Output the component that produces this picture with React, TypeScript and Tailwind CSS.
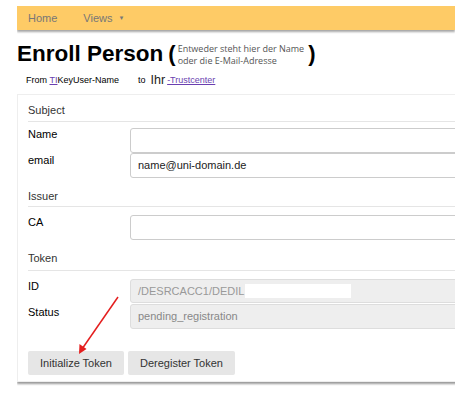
import React from "react";

function Header({ children, pt, pb }: { children: React.ReactNode; pt: string; pb: string }) {
  return (
    <div className={`${pt} ${pb} border-b border-[#e5e5e5] text-[11px] leading-[13px] text-[#333]`}>{children}</div>
  );
}

export default function App() {
  return (
    <div className="w-[468px] h-[393px] bg-white relative overflow-hidden font-['Liberation_Sans',Arial,sans-serif]">
      <div className="ml-[17px] w-[438px] overflow-x-clip pt-[6px]">
        {/* navbar */}
        <div className="h-[24px] bg-[#fecb66] shadow-[0_2px_2px_rgba(0,0,0,0.35)] flex items-center text-[11px] text-[#777] pl-[11px]">
          <span>Home</span>
          <span className="ml-[26px]">Views</span>
          <span className="ml-[6px] text-[6px] leading-none">▼</span>
        </div>

        {/* title */}
        <div className="mt-[10px] h-[28px] flex items-center">
          <span className="text-[22.5px] font-bold leading-[28px] text-black">Enroll Person</span>
          <span className="ml-[5px] text-[22px] font-bold leading-[28px] text-black">(</span>
          <div className="ml-[2px] font-['Open_Sans',sans-serif] text-[9px] leading-[12px] text-[#555] mt-[2px]">
            <div>Entweder steht hier der Name</div>
            <div>oder die E-Mail-Adresse</div>
          </div>
          <span className="ml-[4px] text-[22px] font-bold leading-[28px] text-black">)</span>
        </div>

        <div className="mt-[6px] h-[12px] flex items-center text-[9px] leading-[12px] text-black pl-[9px]">
          <span>From&nbsp;</span>
          <span className="text-[#6a3fb0] underline">TI</span>
          <span>KeyUser-Name</span>
          <span className="ml-[19px]">to</span>
          <span className="ml-[5px] text-[12.5px] text-[#222]">Ihr</span>
          <span className="ml-[2px] text-[#6a3fb0] underline">-Trustcenter</span>
        </div>

        {/* card */}
        <div className="mt-[8px] w-[470px] bg-white border border-[#eeeeee] shadow-[0_2px_2px_rgba(0,0,0,0.4)] pl-[10px] pb-[6px]">
          <Header pt="pt-[9px]" pb="pb-[4px]">Subject</Header>

          <div className="mt-[6px] flex flex-col gap-0">
            <div className="flex h-[25px]">
              <div className="w-[102px] text-[11px] leading-[13px] text-black">Name</div>
              <div className="flex-1 border border-[#cccccc] rounded-[3px] bg-white"></div>
            </div>
            <div className="flex h-[25px]">
              <div className="w-[102px] text-[11px] leading-[13px] text-black pt-[1px]">email</div>
              <div className="flex-1 border border-[#cccccc] rounded-[3px] bg-white flex items-center pl-[7px] text-[11px] text-[#222]">
                name@uni-domain.de
              </div>
            </div>
          </div>

          <Header pt="pt-[12px]" pb="pb-[3px]">Issuer</Header>

          <div className="mt-[8px] flex h-[25px]">
            <div className="w-[102px] text-[11px] leading-[13px] text-black pt-[1px]">CA</div>
            <div className="flex-1 border border-[#cccccc] rounded-[3px] bg-white"></div>
          </div>

          <Header pt="pt-[12px]" pb="pb-[5px]">Token</Header>

          <div className="mt-[8px] flex flex-col gap-[1px]">
            <div className="flex h-[24px]">
              <div className="w-[102px] text-[11px] leading-[13px] text-black pt-[1px]">ID</div>
              <div className="flex-1 border border-[#dddddd] rounded-[3px] bg-[#eeeeee] flex items-center pl-[7px] text-[11px] text-[#999]">
                <span>/DESRCACC1/DEDIL</span>
                <span className="ml-[1px] w-[106px] h-[14px] bg-white"></span>
              </div>
            </div>
            <div className="flex h-[25px]">
              <div className="w-[102px] text-[11px] leading-[13px] text-black pt-[2px]">Status</div>
              <div className="flex-1 border border-[#dddddd] rounded-[3px] bg-[#eeeeee] flex items-center pl-[7px] text-[11px] text-[#888]">
                pending_registration
              </div>
            </div>
          </div>

          <div className="mt-[22px] flex gap-[4px]">
            <div className="w-[96px] h-[24px] bg-[#e6e6e6] rounded-[2px] flex items-center justify-center text-[11px] text-[#333]">
              Initialize Token
            </div>
            <div className="w-[107px] h-[24px] bg-[#e6e6e6] rounded-[2px] flex items-center justify-center text-[11px] text-[#333]">
              Deregister Token
            </div>
          </div>
        </div>
      </div>

      {/* red annotation arrow */}
      <svg className="absolute left-0 top-0" width="468" height="393" viewBox="0 0 468 393">
        <line x1="118" y1="297" x2="82" y2="349" stroke="#e41e1e" strokeWidth="1.5" />
        <polygon points="79,354 79.5,344 86.5,349" fill="#e41e1e" />
      </svg>
    </div>
  );
}
